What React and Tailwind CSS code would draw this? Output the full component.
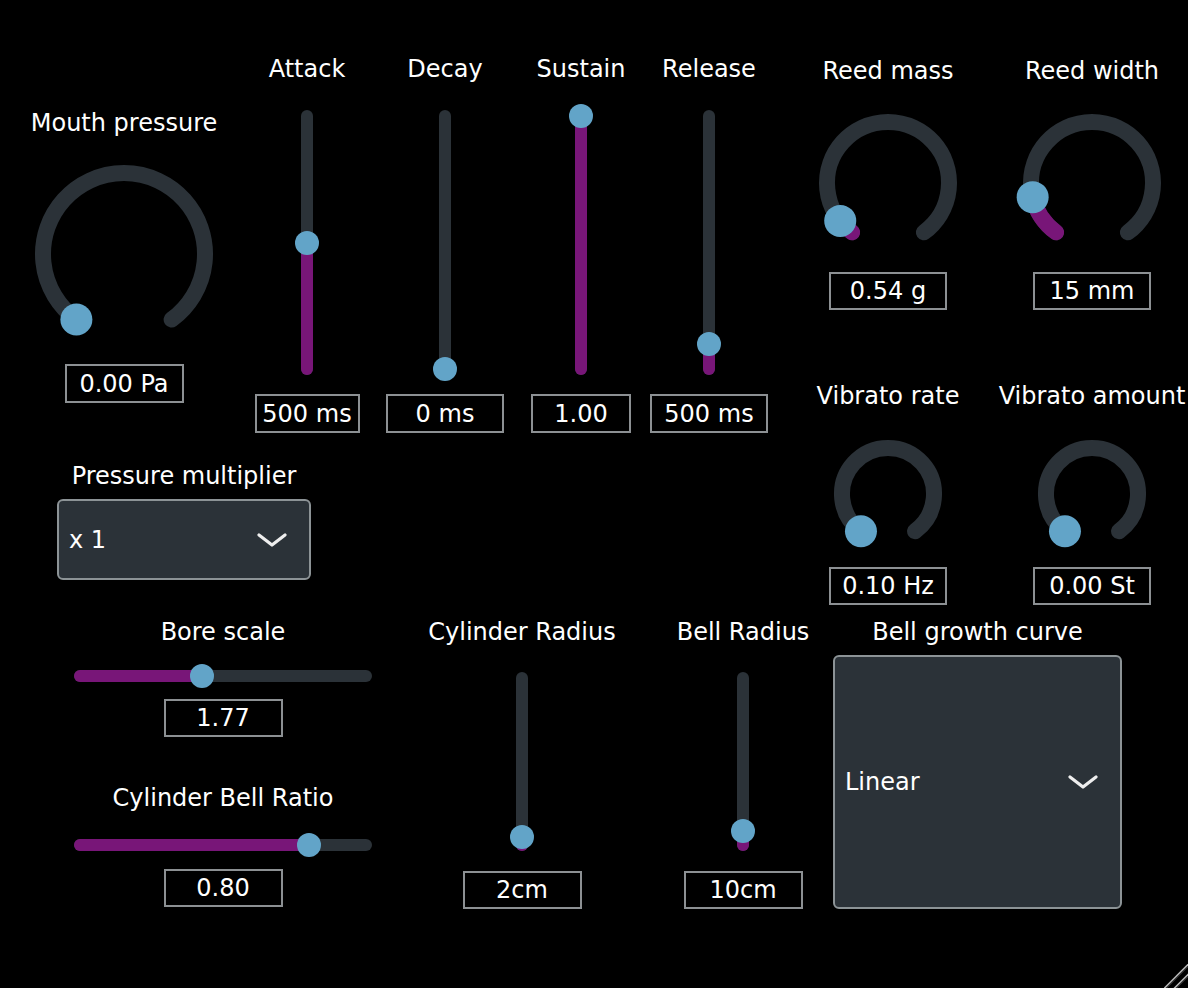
import React from "react";

const TRACK = "#2b3238";
const PURPLE = "#781678";
const THUMB = "#62a4c8";

function polar(c, r, deg) {
  const a = (deg * Math.PI) / 180;
  return [c - r * Math.sin(a), c + r * Math.cos(a)];
}

function Knob({ size, r, value }) {
  const c = size / 2;
  const [sx, sy] = polar(c, r, 36);
  const [ex, ey] = polar(c, r, 324);
  const phi = 36 + 288 * value;
  const [vx, vy] = polar(c, r, phi);
  const large = phi - 36 > 180 ? 1 : 0;
  return (
    <svg width={size} height={size} className="block shrink-0 overflow-visible">
      <path
        d={`M ${sx} ${sy} A ${r} ${r} 0 1 1 ${ex} ${ey}`}
        fill="none"
        stroke={TRACK}
        strokeWidth="16"
        strokeLinecap="round"
      />
      {value > 0 && (
        <path
          d={`M ${sx} ${sy} A ${r} ${r} 0 ${large} 1 ${vx} ${vy}`}
          fill="none"
          stroke={PURPLE}
          strokeWidth="16"
          strokeLinecap="round"
        />
      )}
      <circle cx={vx} cy={vy} r="16" fill={THUMB} />
    </svg>
  );
}

function Label({ children }) {
  return (
    <div className="h-[30px] flex items-center justify-center whitespace-nowrap text-[24px] leading-none text-white">
      {children}
    </div>
  );
}

function ValueBox({ children, w = "w-[119px]", h = "h-[38px]" }) {
  return (
    <div
      className={`${w} ${h} border-2 border-[#8c9093] flex items-center justify-center text-[24px] leading-none text-white whitespace-nowrap`}
    >
      {children}
    </div>
  );
}

function VSlider({ height, value }) {
  const center = 6 + value * (height - 12);
  return (
    <div className="relative w-[24px] shrink-0" style={{ height }}>
      <div className="absolute left-[6px] top-0 bottom-0 w-[12px] rounded-full bg-[#2b3238]" />
      <div
        className="absolute left-[6px] bottom-0 w-[12px] rounded-full bg-[#781678]"
        style={{ height: center + 6 }}
      />
      <div
        className="absolute left-0 w-[24px] h-[24px] rounded-full bg-[#62a4c8]"
        style={{ bottom: center - 12 }}
      />
    </div>
  );
}

function HSlider({ width, value }) {
  const center = 6 + value * (width - 12);
  return (
    <div className="relative h-[24px] shrink-0" style={{ width }}>
      <div className="absolute top-[6px] left-0 right-0 h-[12px] rounded-full bg-[#2b3238]" />
      <div
        className="absolute top-[6px] left-0 h-[12px] rounded-full bg-[#781678]"
        style={{ width: center + 6 }}
      />
      <div
        className="absolute top-0 w-[24px] h-[24px] rounded-full bg-[#62a4c8]"
        style={{ left: center - 12 }}
      />
    </div>
  );
}

function Chevron() {
  return (
    <svg width="30" height="16" viewBox="0 0 30 16" className="block shrink-0">
      <polyline
        points="2,3 15,13 28,3"
        fill="none"
        stroke="#eeeeee"
        strokeWidth="3.2"
        strokeLinecap="round"
        strokeLinejoin="round"
      />
    </svg>
  );
}

function Dropdown({ text, h }) {
  return (
    <div
      className={`${h} w-full rounded-[6px] border-2 border-[#8c9396] bg-[#2b3238] flex items-center justify-between pl-[10px] pr-[22px] text-[24px] leading-none text-white`}
    >
      <span>{text}</span>
      <Chevron />
    </div>
  );
}

function ADSRColumn({ label, width, value, box, boxW }) {
  return (
    <div className={`${width} flex flex-col items-center pt-[54px] shrink-0`}>
      <Label>{label}</Label>
      <div className="mt-[26px]">
        <VSlider height={265} value={value} />
      </div>
      <div className="mt-[19px]">
        <ValueBox w={boxW} h="h-[39px]">
          {box}
        </ValueBox>
      </div>
    </div>
  );
}

function RightColumn({ width, l1, v1, b1, l2, v2, b2 }) {
  return (
    <div className={`${width} flex flex-col items-center pt-[56px] shrink-0`}>
      <Label>{l1}</Label>
      <div className="mt-[27px]">
        <Knob size={140} r={61} value={v1} />
      </div>
      <div className="mt-[19px]">
        <ValueBox w="w-[118px]">{b1}</ValueBox>
      </div>
      <div className="mt-[71px]">
        <Label>{l2}</Label>
      </div>
      <div className="mt-[28px]">
        <Knob size={110} r={46} value={v2} />
      </div>
      <div className="mt-[18px]">
        <ValueBox w="w-[118px]">{b2}</ValueBox>
      </div>
    </div>
  );
}

function BottomVColumn({ label, ml, width, value, box }) {
  return (
    <div className={`${ml} ${width} flex flex-col items-center pt-[7px] shrink-0`}>
      <Label>{label}</Label>
      <div className="mt-[25px]">
        <VSlider height={179} value={value} />
      </div>
      <div className="mt-[20px]">
        <ValueBox>{box}</ValueBox>
      </div>
    </div>
  );
}

export default function App() {
  return (
    <div className="relative w-[1188px] h-[988px] bg-black overflow-hidden text-white font-['DejaVu_Sans',sans-serif]">
      {/* Top section */}
      <div className="flex h-[610px]">
        <div className="flex flex-col w-[780px] shrink-0">
          <div className="flex items-start">
            <div className="w-[248px] flex flex-col items-center pt-[108px] shrink-0">
              <Label>Mouth pressure</Label>
              <div className="mt-[26px]">
                <Knob size={180} r={81} value={0} />
              </div>
              <div className="mt-[20px]">
                <ValueBox h="h-[39px]">0.00 Pa</ValueBox>
              </div>
            </div>
            <ADSRColumn label="Attack" width="w-[118px]" value={0.5} box="500 ms" boxW="w-[105px]" />
            <ADSRColumn label="Decay" width="w-[158px]" value={0} box="0 ms" boxW="w-[118px]" />
            <ADSRColumn label="Sustain" width="w-[114px]" value={1} box="1.00" boxW="w-[100px]" />
            <ADSRColumn label="Release" width="w-[142px]" value={0.1} box="500 ms" boxW="w-[118px]" />
          </div>
          <div className="ml-[57px] w-[254px] mt-[28px] flex flex-col items-center">
            <Label>Pressure multiplier</Label>
            <div className="mt-[8px] w-full">
              <Dropdown text="x 1" h="h-[81px]" />
            </div>
          </div>
        </div>
        <RightColumn
          width="w-[216px]"
          l1="Reed mass"
          v1={0.054}
          b1="0.54 g"
          l2="Vibrato rate"
          v2={0}
          b2="0.10 Hz"
        />
        <RightColumn
          width="w-[192px]"
          l1="Reed width"
          v1={0.141}
          b1="15 mm"
          l2="Vibrato amount"
          v2={0}
          b2="0.00 St"
        />
      </div>

      {/* Bottom section */}
      <div className="flex items-start">
        <div className="ml-[74px] w-[298px] flex flex-col items-center pt-[7px] shrink-0">
          <Label>Bore scale</Label>
          <div className="mt-[17px]">
            <HSlider width={298} value={0.428} />
          </div>
          <div className="mt-[11px]">
            <ValueBox>1.77</ValueBox>
          </div>
          <div className="mt-[46px]">
            <Label>Cylinder Bell Ratio</Label>
          </div>
          <div className="mt-[20px]">
            <HSlider width={298} value={0.8} />
          </div>
          <div className="mt-[12px]">
            <ValueBox>0.80</ValueBox>
          </div>
        </div>
        <BottomVColumn label="Cylinder Radius" ml="ml-[50px]" width="w-[200px]" value={0.048} box="2cm" />
        <BottomVColumn label="Bell Radius" ml="ml-[56px]" width="w-[130px]" value={0.086} box="10cm" />
        <div className="ml-[25px] w-[289px] flex flex-col items-center pt-[7px] shrink-0">
          <Label>Bell growth curve</Label>
          <div className="mt-[8px] w-full">
            <Dropdown text="Linear" h="h-[254px]" />
          </div>
        </div>
      </div>

      {/* Resize grip */}
      <svg width="24" height="24" viewBox="0 0 24 24" className="absolute right-0 bottom-0">
        <line x1="0" y1="24.5" x2="24.5" y2="0" stroke="#bdbdbd" strokeWidth="1.5" />
        <line x1="1.5" y1="25" x2="25" y2="1.5" stroke="#555" strokeWidth="1" />
        <line x1="10" y1="24.5" x2="24.5" y2="10" stroke="#bdbdbd" strokeWidth="1.5" />
        <line x1="11.5" y1="25" x2="25" y2="11.5" stroke="#555" strokeWidth="1" />
      </svg>
    </div>
  );
}
